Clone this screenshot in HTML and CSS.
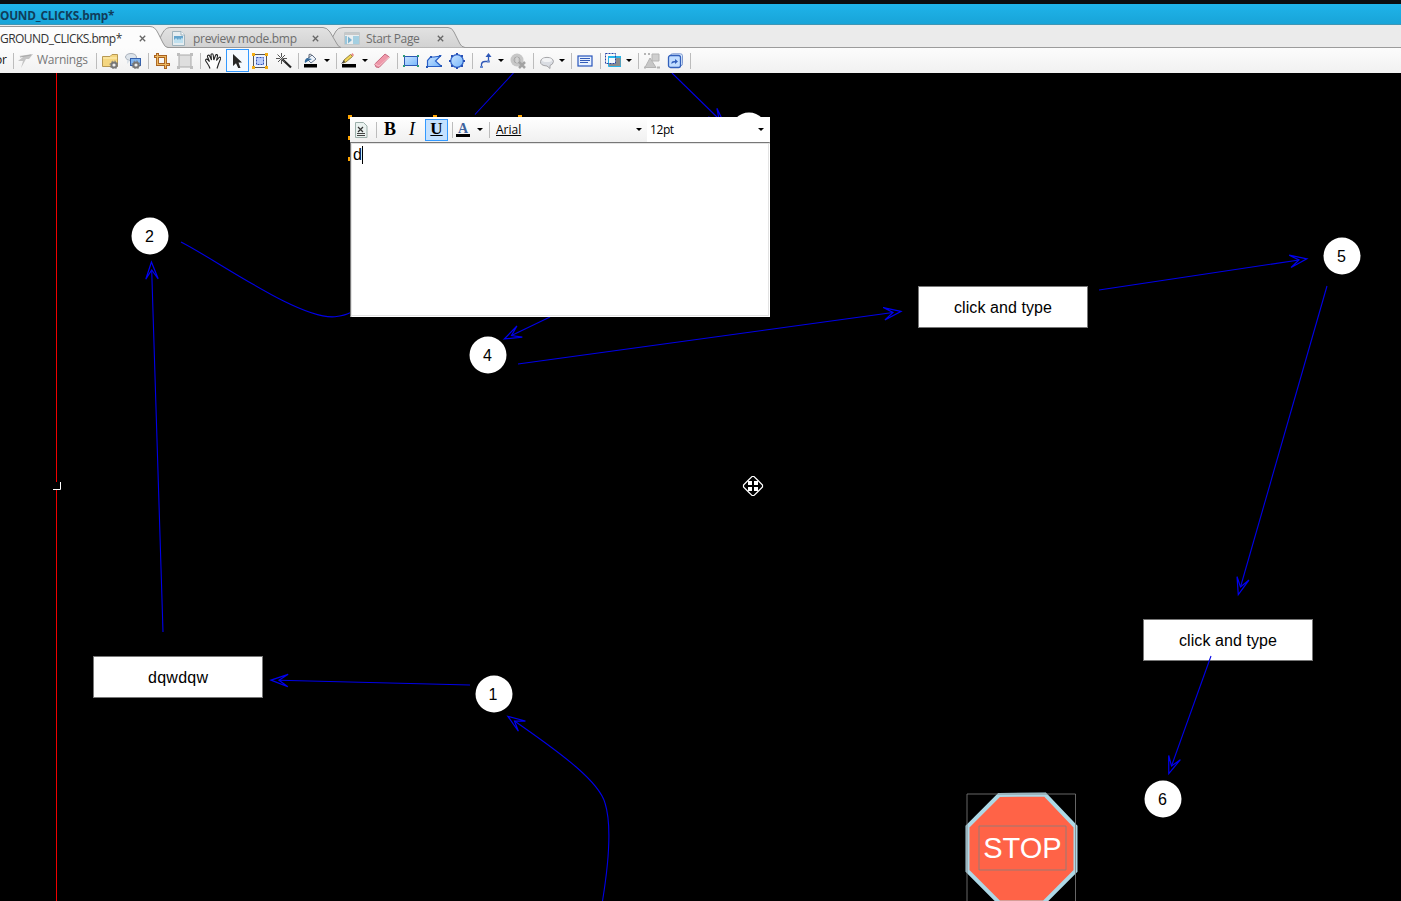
FILE: index.html
```html
<!DOCTYPE html>
<html lang="en">
<head>
<meta charset="utf-8">
<title>BACKGROUND_CLICKS.bmp</title>
<link rel="stylesheet" href="styles.css">
</head>
<body>
<div class="app">
<header class="titlebar"><span class="title">OUND_CLICKS.bmp*</span></header>
<nav class="tabs">
<svg class="tab-shapes" width="1401" height="24" viewBox="0 24 1401 24">
<defs><linearGradient id="tg" x1="0" y1="0" x2="0" y2="1"><stop offset="0" stop-color="#e2e2e2"/><stop offset="1" stop-color="#d2d2d2"/></linearGradient></defs>
<path d="M0 47.5H1401" stroke="#9b9b9b"/>
<path d="M326 47.5C330 43 333 36 336 31Q338 27.500 343 27.500H448Q452 27.500 454 32L460 44Q461.500 47 465 47.500" fill="url(#tg)" stroke="#979797"/>
<path d="M157 47.500L161 36C164 30 166 27.500 171 27.500H323Q327 27.500 330 32L337 44Q338.500 47 341 47.500Z" fill="url(#tg)" stroke="#979797"/>
<path d="M-1 48.500V26.500H150Q155 26.500 158 33L163 43Q165 47.500 168 47.500V48.500Z" fill="#fcfcfc" stroke="#979797"/>
</svg>
<div class="tab tab-active"><span class="label">GROUND_CLICKS.bmp*</span><svg class="close" viewBox="0 0 7 7"><path d="M.8.8L6.200 6.200M6.200.8L.8 6.200"/></svg></div>
<div class="tab tab-preview"><svg class="ico" width="13" height="15" viewBox="0 0 13 15"><path d="M.5.500H9L12.500 4V14.500H.5Z" fill="#e6edf0" stroke="#9fb3bd"/><path d="M9 .5V4h3.500" fill="#fff" stroke="#9fb3bd"/><rect x="2" y="5" width="9" height="7" fill="#65a5cd"/><path d="M2 9L4 7L6 9L7 7L8 9L10 6.500L11 8V12H2Z" fill="#bfe0ef"/></svg><span class="label">preview mode.bmp</span><svg class="close" viewBox="0 0 7 7"><path d="M.8.8L6.200 6.200M6.200.8L.8 6.200"/></svg></div>
<div class="tab tab-start"><svg class="ico" width="16" height="13" viewBox="0 0 16 13"><path d="M.5.500H15.500V12.500H.5Z" fill="#e9eef0" stroke="#c2c8ca"/><path d="M1 1H15V3H1Z" fill="#c8c8c8"/><path d="M9 4h6v8H9z" fill="#a4cfe1"/><path d="M1 4h2v8H1z" fill="#9bc6db"/><path d="M4 4.500L8 8L4 11.500Z" fill="#79b2cf"/></svg><span class="label">Start Page</span><svg class="close" viewBox="0 0 7 7"><path d="M.8.8L6.200 6.200M6.200.8L.8 6.200"/></svg></div>
</nav>
<div class="toolbar">
<span class="word-end">or</span><i class="sep"></i>
<svg viewBox="0 0 16 16"><path d="M1 3L15 1L11 6H8L3 15L5 8L0 8L5 4Z" fill="#c4c4c4"/><path d="M2 4L13 2" stroke="#aaa"/></svg>
<span class="warnings">Warnings</span><i class="sep"></i>
<svg viewBox="0 0 16 16"><path d="M.5 13.500V3.500H8L10 1.500H15.500V13.500Z" fill="#f4d680" stroke="#b79852"/><path d="M1 5h14" stroke="#fff0b8"/><circle cx="12" cy="12" r="2.600" fill="#eee" stroke="#777" stroke-width="2"/><circle cx="12" cy="12" r="4" fill="none" stroke="#777" stroke-dasharray="1.500 1.640"/></svg>
<svg viewBox="0 0 16 16"><ellipse cx="6" cy="4" rx="5.500" ry="3.500" fill="#dce3ea" stroke="#a8b0ba"/><path d="M2 7v4l3-3" fill="#dce3ea"/><rect x="5.500" y="5.500" width="10" height="7" fill="#80b4ef" stroke="#3461ae"/><circle cx="11" cy="12" r="2.600" fill="#eee" stroke="#777" stroke-width="2"/><circle cx="11" cy="12" r="4" fill="none" stroke="#777" stroke-dasharray="1.500 1.640"/></svg><i class="sep"></i>
<svg viewBox="0 0 16 16"><path d="M3.500 0V11.500H16M0 3.500H11.500V16" fill="none" stroke="#a86121" stroke-width="3"/><path d="M3.500 1V11.500H15M1 3.500H11.500V15" fill="none" stroke="#edb961" stroke-width="1.200"/></svg>
<svg viewBox="0 0 16 16"><rect x="2" y="2" width="12" height="12" fill="#dedede" stroke="#aaa"/><path d="M0 0h3v3H0zM13 0h3v3h-3zM0 13h3v3H0zM13 13h3v3h-3z" fill="#bebebe"/></svg><i class="sep"></i>
<svg viewBox="0 0 16 16"><path d="M5 15.500C4 12 2 10 .8 8C0 6 2 5.500 3 7L4.500 8.500L2.600 4C2 2 4 1.600 4.700 3L6.500 7L6 2C6 .3 8 .3 8.200 2L8.800 7L10.500 2.500C11 1 12.800 1.500 12.500 3L11.500 7.500L14 4.500C15 3.500 16 4.500 15.500 6L13.500 11L12 15.500" fill="#fff" stroke="#222" stroke-width="1.100"/></svg>
<span class="picked"><svg viewBox="0 0 16 16"><path d="M3 1V13L6 10.200L8.200 15H10.500L8.500 9.500H12Z" fill="#272727"/></svg></span>
<svg viewBox="0 0 16 16"><rect x="1.500" y="1.500" width="13" height="13" fill="#edf2ff" stroke="#555"/><rect x="4.500" y="4.500" width="7" height="7" fill="#b9ccfa" stroke="#3051ba" stroke-dasharray="2 1"/><path d="M0 0h3v3H0zM13 0h3v3h-3zM0 13h3v3H0zM13 13h3v3h-3z" fill="#f5ae12"/></svg>
<svg viewBox="0 0 16 16"><path d="M6 6L15 14.500" stroke="#222" stroke-width="2.200"/><path d="M5.500 0V4M5.500 7V11M0 5.500H4M7 5.500H11M1.500 1.500L9 9M9 2L2 9" stroke="#555"/></svg><i class="sep"></i>
<svg viewBox="0 0 16 16"><path d="M4 6L9 2L13 6L8 10Z" fill="#edf3fa" stroke="#65758e"/><path d="M6 5V1.500Q8 0 9 3" fill="none" stroke="#5f6878"/><path d="M4 5L9 6L5 8L2 10Q1 7 4 5" fill="#356c9d"/><path d="M1 11H14V14.500H1Z"/></svg><b class="caret"></b><i class="sep"></i>
<svg viewBox="0 0 16 16"><path d="M2 10L3 7L9.500 1.500L11.500 3.500L5 9Z" fill="#f2d657" stroke="#96823e"/><path d="M10 1.500L11.500 0L13 2L12 3.500Z" fill="#e98b88"/><path d="M0 11L3 7L4 9Z" fill="#444"/><path d="M1 11H15V14.500H1Z"/></svg><b class="caret"></b>
<svg viewBox="0 0 16 16"><path d="M.8 11L11 1L15.300 4L5 14.500L2 14Z" fill="#ee98a9" stroke="#c76b80"/><path d="M1 11L5 13L15 4" fill="none" stroke="#f8bdc8"/></svg><i class="sep"></i>
<svg viewBox="0 0 16 16"><defs><linearGradient id="b" x2="1" y2="1"><stop stop-color="#c9e4ff"/><stop offset="1" stop-color="#77b6fb"/></linearGradient></defs><rect x="1.500" y="3.500" width="13" height="9" fill="url(#b)" stroke="#2b56b5"/><path d="M0 2h2v2H0zM14 2h2v2h-2zM0 12h2v2H0zM14 12h2v2h-2z" fill="#2f9b79"/></svg>
<svg viewBox="0 0 16 16"><path d="M1.500 13.500V7.500L4.500 4H8L14.500 3L9.500 8L14.500 12.500V13.500Z" fill="url(#b)" stroke="#285fc7" stroke-width="1.200"/><path d="M0 13h2v2H0zM13 2h2v2h-2zM14 12h2v2h-2zM4 3h2v2H4z" fill="#2557b8"/></svg>
<svg viewBox="0 0 16 16"><circle cx="8" cy="8" r="6.300" fill="url(#b)" stroke="#285fc7" stroke-width="1.200"/><path d="M7 0h2v2H7zM7 14h2v2H7zM0 7h2v2H0zM14 7h2v2h-2zM2 2h2v2H2zM12 2h2v2h-2zM2 12h2v2H2zM12 12h2v2h-2z" fill="#2950b5"/></svg><i class="sep"></i>
<svg viewBox="0 0 16 16"><path d="M2.500 14V11Q3 8.500 6 8.500H9.500V3" fill="none" stroke="#2e57b7" stroke-width="1.300"/><path d="M6.500 4L9.500 0L12.500 4Z" fill="#2e57b7"/><path d="M1 13h3v2H1zM8 7.500h3v2H8z" fill="#6689cf"/></svg><b class="caret"></b>
<svg viewBox="0 0 16 16"><circle cx="7" cy="7" r="6.500" fill="#c7c7c7"/><circle cx="7" cy="7" r="3" fill="none" stroke="#a8a8a8"/><path d="M7 4v6" stroke="#ddd"/><path d="M9 9L15 15M15 9L9 15" stroke="#a3a3a3" stroke-width="2.500"/></svg><i class="sep"></i>
<svg viewBox="0 0 16 16"><path d="M8 13Q1 12.500 1.500 8.500C2 3 14 3 14.500 8.500Q14 11.500 11 12.500L11 15.500Z" fill="#dadde3" stroke="#a5a5a8"/><ellipse cx="8" cy="7" rx="5" ry="2" fill="#f2f3f5"/></svg><b class="caret"></b><i class="sep"></i>
<svg viewBox="0 0 16 16"><rect x="1" y="3" width="14" height="10" fill="#e7f1ff" stroke="#2855bb" stroke-width="1.200"/><path d="M3 5.500H13M3 7.500H13M3 9.500H11" stroke="#345cb8"/></svg><i class="sep"></i>
<svg viewBox="0 0 16 16"><path d="M3.500 4H16V13.500H3.500Z" fill="#8b8b8b" stroke="#27b4e9"/><path d="M3 4H16" stroke="#27b4e9" stroke-width="2"/><path d="M4 5h6.500v5.500H4z" fill="#f4faff"/><rect x=".5" y=".5" width="10" height="10" fill="none" stroke="#2541a5" stroke-dasharray="2 1"/></svg><b class="caret"></b><i class="sep"></i>
<svg viewBox="0 0 16 16"><path d="M8 1h7v7H8z" fill="#cfcfcf" stroke="#b5b5b5"/><path d="M6 5L12 14.500H1Z" fill="#c7c7c7" stroke="#b3b3b3"/><path d="M0 1h2M4 1h2M0 14.500h2M13 14.500h3" stroke="#b5b5b5" stroke-width="2"/></svg>
<svg viewBox="0 0 16 16"><rect x="3.500" y=".8" width="12" height="12" rx="2" fill="#dcebff" stroke="#809bd0"/><rect x="1.500" y="2.500" width="12" height="12" rx="2" fill="#c1ddff" stroke="#3260bb" stroke-width="1.300"/><path d="M4.500 11Q4 8 7 8H8V6L11 8.500L8 11V9.500Q6 9 4.500 11" fill="#315fbc"/></svg><i class="sep"></i>
</div>
<main class="canvas">
<svg class="diagram" width="1401" height="828" viewBox="0 73 1401 828">
<defs><marker id="tip" markerUnits="userSpaceOnUse" markerWidth="24" markerHeight="20" viewBox="-12 -10 24 20" orient="auto"><path d="M8 0L-9-6.200L0 0L-9 6.200Z" fill="none" stroke="#0000f0" stroke-width="1.200"/></marker></defs>
<path d="M56.500 73V482M56.500 490V901" stroke="#f00000"/>
<path d="M53 489.500H60.500V482" fill="none" stroke="#fff"/>
<g class="boxes"><rect x="93.500" y="656.500" width="169" height="41"/><rect x="918.500" y="286.500" width="169" height="41"/><rect x="1143.500" y="619.500" width="169" height="41"/></g>
<g class="links">
<path d="M163 632L151.700 270"/><path d="M470 685L279 680.300"/><path d="M602.500 901C610 855 611 822 605 803C599 782 565 756 514.500 721"/>
<path d="M550 317L511.500 335.500"/><path d="M518 364L893 312.500"/><path d="M1099 290L1299 260"/><path d="M1327 286L1240.500 587"/><path d="M1211 656L1171.500 766"/><path d="M672 73L719 119"/>
<path class="plain" d="M181 242C220 262 300 320 335 316.700C341 316 346 315 350 312.700"/><path class="plain" d="M513.500 73L475 114.500"/>
</g>
<g class="nodes"><circle cx="150" cy="236" r="18.500"/><circle cx="488" cy="355" r="18.500"/><circle cx="1342" cy="256" r="18.500"/><circle cx="494" cy="694" r="18.500"/><circle cx="1163" cy="799" r="18.500"/><circle cx="749" cy="131" r="18.500"/></g>
<g class="names"><text x="149.500" y="242">2</text><text x="487.500" y="361">4</text><text x="1341.500" y="262">5</text><text x="493" y="700">1</text><text x="1162.500" y="805">6</text><text x="178" y="683" textLength="60">dqwdqw</text><text x="1003" y="313" textLength="98">click and type</text><text x="1228" y="646" textLength="98">click and type</text></g>
<path d="M999 795L1045 794.500L1075.500 826.500V871L1044 902.500H999L967.500 871V826.500Z" fill="#ff6347" stroke="#add8e6" stroke-width="4"/>
<path d="M967 910V794H1075.500V910M979 826H1066V870H979Z" fill="none" stroke="#808080" stroke-opacity=".8"/>
<text class="stop" x="1022.500" y="858">STOP</text>
<path d="M752 476.500H754L757 479.500L759.500 482L762.500 485V487L759.500 490L757 492.500L754 495.500H752L749 492.500L746.500 490L743.500 487V485L746.500 482L749 479.500Z" fill="#000" stroke="#fff" stroke-width="1.200"/><path d="M748 481h4v4h-4zM754 481h4v4h-4zM748 487h4v4h-4zM754 487h4v4h-4z" fill="#fff"/>
<path d="M348 115h4v4h-4zM433 115h4v4h-4zM518 115h4v4h-4zM348 136h4v4h-4zM348 157h4v4h-4z" fill="#ffa500"/>
</svg>
<section class="editor">
<div class="format">
<svg class="doc" width="13" height="16" viewBox="0 0 13 16"><path d="M.5.500H8.500L12 4V15.500H.5Z" fill="#eaf2f0" stroke="#9cafaa"/><path d="M3 5L8 10M8 5L3 10" stroke="#333" stroke-width="1.200"/><path d="M2 11.500H10M2 13.500H10" stroke="#444"/></svg>
<i class="sep"></i><span class="serif bold">B</span><span class="serif ital">I</span><span class="serif under">U</span><i class="sep"></i>
<span class="color">A</span><b class="caret"></b><i class="sep"></i><span class="family">Arial</span><b class="caret"></b><span class="size"><span>12pt</span><b class="caret"></b></span>
</div>
<div class="entry"><span class="typed">d</span></div>
</section>
</main>
</div>
</body>
</html>
```
FILE: styles.css
```css
* { box-sizing: border-box; }
body { margin: 0; background: #000; overflow: hidden; font: 12px "Open Sans", "Noto Sans", sans-serif; }
.app { display: flex; flex-direction: column; width: 1401px; height: 901px; overflow: hidden; }
svg { display: block; }
.titlebar { flex: 0 0 24px; height: 24px; border-top: 4px solid #0b0e10; background: linear-gradient(#1fb4ea, #18a4d8); display: flex; align-items: center; }
.title { font-weight: bold; font-size: 11.8px; color: #103d5b; letter-spacing: -.22px; line-height: 18px; padding-top: 2px; white-space: nowrap; }
.tabs { position: relative; flex: 0 0 24px; display: flex; background: #ebebeb; border-top: 1px solid #3f96b5; }
.tab-shapes { position: absolute; left: 0; top: -1px; }
.tab { position: relative; display: flex; align-items: center; height: 23px; padding-top: 3px; color: #6d6d6d; white-space: nowrap; }
.tab-active { width: 172px; color: #333; }
.tab-active .label { width: 139px; letter-spacing: -.54px; }
.tab-preview { width: 172px; }
.tab-preview .ico { margin-right: 8px; }
.tab-preview .label { width: 119px; letter-spacing: -.3px; }
.tab-start { width: 140px; }
.tab-start .ico { margin-right: 6px; }
.tab-start .label { width: 71px; letter-spacing: -.35px; }
.close { width: 7px; height: 7px; stroke: #666; stroke-width: 1.3; fill: none; }
.toolbar { flex: 0 0 25px; background: linear-gradient(#fcfcfc, #f1f1f1); display: grid; align-items: center;
  grid-template-columns: 13px 5px 19px 59px 6px 23px 23px 6px 23px 23px 5px 21px 26px 24px 22px 5px 21px 12px 5px 21px 12px 23px 6px 23px 23px 23px 7px 19px 12px 23px 6px 20px 12px 6px 23px 5px 21px 12px 6px 23px 23px 1px; }
.toolbar svg { width: 16px; height: 16px; }
.word-end { width: 7px; display: flex; justify-content: flex-end; color: #111; }
.warnings { color: #777; letter-spacing: -.25px; }
.word-end, .warnings { line-height: 16px; padding-bottom: 1px; }
.sep { width: 1px; height: 16px; background: #bcbcbc; }
.caret { width: 0; height: 0; border: 3px solid transparent; border-top-color: #000; border-bottom: 0; }
.picked { width: 23px; height: 23px; border: 1px solid #3399ff; background: #f5faff; display: grid; place-items: center; }
.canvas { position: relative; flex: 1; background: #000; }
.boxes rect { fill: #fff; stroke: #777; }
.links path { fill: none; stroke: #0000e8; stroke-width: 1.1; marker-end: url(#tip); }
.links .plain { marker-end: none; }
.nodes circle { fill: #fff; }
.names text { font: 16px "Liberation Sans", sans-serif; text-anchor: middle; fill: #000; }
.stop { font: 29px "Liberation Sans", sans-serif; text-anchor: middle; fill: #fff; }
.editor { position: absolute; left: 350px; top: 44px; width: 420px; height: 200px; background: #fff; display: flex; flex-direction: column; }
.format { height: 25px; display: grid; align-items: center; background: linear-gradient(#fff, #f0f0f0); padding-left: 5px;
  grid-template-columns: 21px 8px 22px 19px 27px 4px 21px 12px 7px 140px 11px 123px; }
.serif { font: bold 16px/20px "Liberation Serif", serif; }
.bold { font-size: 18px; line-height: 18px; padding-bottom: 1px; }
.ital { font-style: italic; font-weight: normal; font-size: 18px; line-height: 18px; padding: 0 0 1px 3px; }
.under { width: 23px; height: 22px; border: 1px solid #3399ff; background: #c4e1ff; font-size: 17px; line-height: 18px; text-align: center; text-decoration: underline; }
.color { width: 14px; height: 14px; border-bottom: 3px solid #000; font: bold 14px/11px "Liberation Serif", serif; text-align: center; color: #3f639e; }
.family { text-decoration: underline; }
.size { height: 24px; line-height: 16px; letter-spacing: -.4px; background: #fff; display: flex; align-items: center; justify-content: space-between; padding: 0 6px 0 3px; }
.entry { flex: 1; border-top: 2px solid #777; border-left: 2px solid #777; border-right: 1px solid #fff; border-bottom: 1px solid #fff; outline: 1px solid #e3e3e3; outline-offset: -2px; padding: 2px 1px; font: 16px/18px "Liberation Sans", sans-serif; }
.typed { display: inline-block; border-right: 1px solid #000; }
```
